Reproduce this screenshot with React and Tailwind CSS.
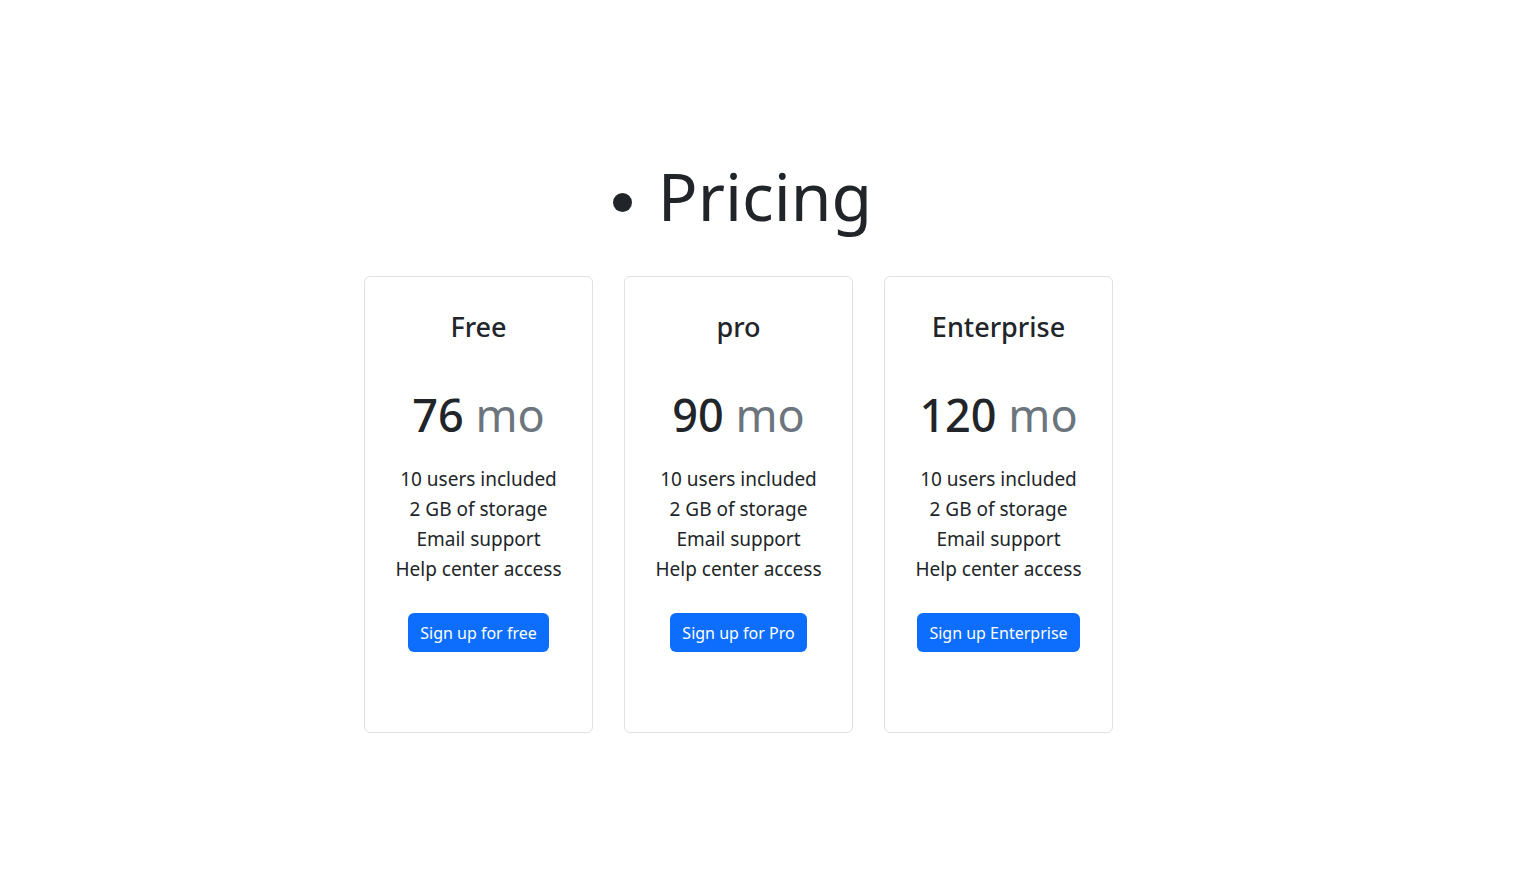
import React from "react";

const plans = [
  { name: "Free", price: "76", cta: "Sign up for free" },
  { name: "pro", price: "90", cta: "Sign up for Pro" },
  { name: "Enterprise", price: "120", cta: "Sign up Enterprise" },
];

const features = ["10 users included", "2 GB of storage", "Email support", "Help center access"];

const App = () => {
  return (
    <div className="min-h-screen bg-white text-[#212529] font-['Noto_Sans',sans-serif] pt-[147px]">
      {/* Heading */}
      <ul className="list-disc pl-0 m-0">
        <li className="w-fit mx-auto text-[66px] leading-[96px] font-normal marker:text-[54px]">Pricing</li>
      </ul>

      {/* Cards */}
      <div className="flex justify-center gap-[31px] mt-[33px] mr-[53px]">
        {plans.map((plan) => (
          <div
            key={plan.name}
            className="w-[229px] h-[457px] border border-[#dee2e6] rounded-[6px] flex flex-col items-center pt-[35px]"
          >
            <h4 className="text-[27px] leading-[29px] font-medium">{plan.name}</h4>
            <p className="mt-[45px] text-[45px] leading-[58px] font-medium">
              {plan.price} <span className="text-[#6c757d] font-normal">mo</span>
            </p>
            <ul className="mt-[20px] text-[19px] leading-[30px] text-center">
              {features.map((f) => (
                <li key={f}>{f}</li>
              ))}
            </ul>
            <button className="mt-[29px] h-[39px] px-[12px] rounded-[6px] bg-[#0d6efd] text-white text-[16px] leading-[24px]">
              {plan.cta}
            </button>
          </div>
        ))}
      </div>
    </div>
  );
};

export default App;
